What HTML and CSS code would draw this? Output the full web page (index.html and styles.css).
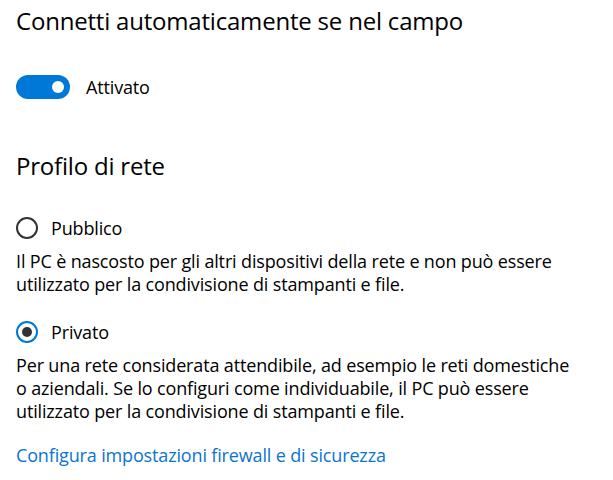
FILE: index.html
```html
<!DOCTYPE html>
<html>
<head>
    <meta charset="UTF-8">
    <title>Impostazioni rete</title>
    <link rel="stylesheet" href="styles.css">
</head>

<body>
    <div class="page">
        <h2 class="title first">Connetti automaticamente se nel campo</h2>

        <div class="toggle-row">
            <span class="toggle on"><span class="knob"></span></span>
            <span class="label">Attivato</span>
        </div>

        <h2 class="title second">Profilo di rete</h2>

        <div class="radio-row first-radio">
            <span class="radio"></span>
            <span class="label">Pubblico</span>
        </div>
        <p class="desc first-desc">Il PC è nascosto per gli altri dispositivi della rete e non può essere utilizzato per la condivisione di stampanti e file.</p>

        <div class="radio-row second-radio">
            <span class="radio checked"></span>
            <span class="label">Privato</span>
        </div>
        <p class="desc">Per una rete considerata attendibile, ad esempio le reti domestiche o aziendali. Se lo configuri come individuabile, il PC può essere utilizzato per la condivisione di stampanti e file.</p>

        <a class="link" href="#">Configura impostazioni firewall e di sicurezza</a>
    </div>
</body>
</html>
```

FILE: styles.css
```css
html {
    background: #fff;
}

body {
    margin: 0;
    font-family: "Open Sans", "Noto Sans", sans-serif;
    color: #000;
}

.page {
    padding: 0 0 0 16px;
    max-width: 560px;
}

.title {
    font-size: 24px;
    font-weight: 400;
    line-height: 32px;
    letter-spacing: -0.2px;
    margin: 0;
}

.title.first {
    margin-top: 5px;
}

.title.second {
    margin-top: 51px;
}

.label {
    font-size: 18px;
    line-height: 24px;
    letter-spacing: -0.15px;
}

.toggle-row,
.radio-row {
    display: flex;
    align-items: center;
    height: 24px;
}

.toggle-row {
    margin-top: 38px;
    gap: 16px;
}

.toggle {
    box-sizing: border-box;
    width: 54px;
    height: 24px;
    border-radius: 12px;
    background: #0078d7;
    display: flex;
    align-items: center;
    justify-content: flex-end;
    padding-right: 6px;
}

.knob {
    width: 12px;
    height: 12px;
    border-radius: 50%;
    background: #fff;
}

.radio-row {
    gap: 13px;
}

.first-radio {
    margin-top: 34px;
}

.second-radio {
    margin-top: 24px;
}

.radio {
    box-sizing: border-box;
    width: 22px;
    height: 22px;
    border: 2px solid #333;
    border-radius: 50%;
    display: flex;
    align-items: center;
    justify-content: center;
}

.radio.checked {
    border-color: #0078d7;
}

.radio.checked::after {
    content: '';
    width: 10px;
    height: 10px;
    border-radius: 50%;
    background: #333;
}

.desc {
    font-size: 18px;
    line-height: 23px;
    letter-spacing: -0.15px;
    margin: 10px 0 0;
}

.link {
    display: block;
    margin-top: 21px;
    font-size: 18px;
    line-height: 23px;
    letter-spacing: -0.15px;
    color: #0a74d0;
    text-decoration: none;
}
```
